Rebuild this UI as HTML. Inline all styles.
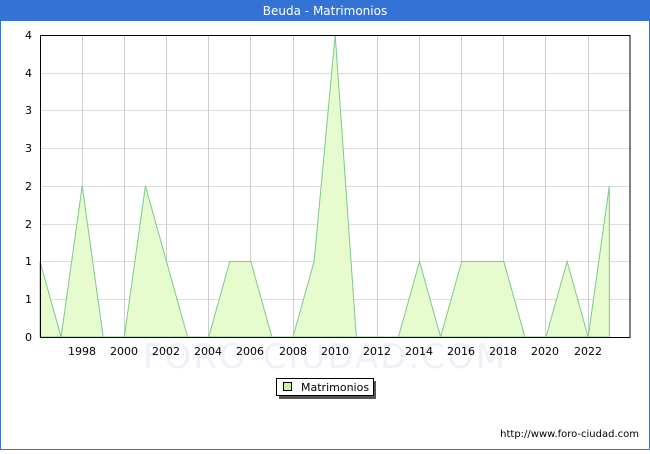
<!DOCTYPE html>
<html><head><meta charset="utf-8"><style>
body{margin:0;width:650px;height:450px;overflow:hidden;font-family:"DejaVu Sans","Liberation Sans",sans-serif;}
</style></head><body>
<svg width="650" height="450" xmlns="http://www.w3.org/2000/svg" font-family="DejaVu Sans, Liberation Sans, sans-serif">
<rect x="0.5" y="0.5" width="649" height="449" fill="#fff" stroke="#3473d6"/>
<rect x="0" y="0" width="650" height="21" fill="#3473d6"/>
<text x="325" y="15" font-size="12" fill="#fff" text-anchor="middle">Beuda - Matrimonios</text>
<text x="325" y="368" font-size="34" fill="#eef1f8" text-anchor="middle" letter-spacing="2">FORO-CIUDAD.COM</text>
<g stroke="#dddddd" stroke-width="1">
<line x1="40" y1="299.5" x2="630" y2="299.5"/><line x1="40" y1="261.5" x2="630" y2="261.5"/>
<line x1="40" y1="224.5" x2="630" y2="224.5"/><line x1="40" y1="186.5" x2="630" y2="186.5"/>
<line x1="40" y1="148.5" x2="630" y2="148.5"/><line x1="40" y1="110.5" x2="630" y2="110.5"/>
<line x1="40" y1="73.5" x2="630" y2="73.5"/>
</g>
<g stroke="#cccccc" stroke-width="1">
<line x1="82.5" y1="35" x2="82.5" y2="337"/><line x1="124.5" y1="35" x2="124.5" y2="337"/>
<line x1="166.5" y1="35" x2="166.5" y2="337"/><line x1="208.5" y1="35" x2="208.5" y2="337"/>
<line x1="250.5" y1="35" x2="250.5" y2="337"/><line x1="293.5" y1="35" x2="293.5" y2="337"/>
<line x1="335.5" y1="35" x2="335.5" y2="337"/><line x1="377.5" y1="35" x2="377.5" y2="337"/>
<line x1="419.5" y1="35" x2="419.5" y2="337"/><line x1="461.5" y1="35" x2="461.5" y2="337"/>
<line x1="503.5" y1="35" x2="503.5" y2="337"/><line x1="545.5" y1="35" x2="545.5" y2="337"/>
<line x1="588.5" y1="35" x2="588.5" y2="337"/>
</g>
<polygon fill="#e6fccf" stroke="#7dc98a" stroke-width="1" points="40,337 40,261.5 61.1,337 82.2,186 103.2,337 124.3,337 145.4,186 166.5,261.5 187.6,337 208.7,337 229.8,261.5 250.8,261.5 271.9,337 293,337 314.1,261.5 335.2,35 356.3,337 377.3,337 398.4,337 419.5,261.5 440.6,337 461.7,261.5 482.8,261.5 503.8,261.5 524.9,337 546,337 567.1,261.5 588.2,337 609.3,186 609.3,337"/>
<rect x="40.5" y="35.5" width="589.5" height="302" fill="none" stroke="#000"/>
<g font-size="11" fill="#000" text-anchor="end">
<text x="32" y="341">0</text><text x="32" y="303">1</text><text x="32" y="265">1</text>
<text x="32" y="228">2</text><text x="32" y="190">2</text><text x="32" y="152">3</text>
<text x="32" y="114">3</text><text x="32" y="77">4</text><text x="32" y="39">4</text>
</g>
<g font-size="11" fill="#000" text-anchor="middle">
<text x="82" y="355">1998</text><text x="124" y="355">2000</text><text x="166" y="355">2002</text>
<text x="208" y="355">2004</text><text x="250" y="355">2006</text><text x="293" y="355">2008</text>
<text x="335" y="355">2010</text><text x="377" y="355">2012</text><text x="419" y="355">2014</text>
<text x="461" y="355">2016</text><text x="503" y="355">2018</text><text x="545" y="355">2020</text>
<text x="588" y="355">2022</text>
</g>
<rect x="279" y="381" width="97" height="18" fill="#555"/>
<rect x="276.5" y="378.5" width="97" height="17" fill="#fff" stroke="#000"/>
<rect x="283.5" y="382.5" width="8" height="8" fill="#ccf59f" stroke="#000"/>
<text x="301" y="391" font-size="11">Matrimonios</text>
<text x="639" y="437" font-size="10" text-anchor="end">http://www.foro-ciudad.com</text>
</svg>
</body></html>
